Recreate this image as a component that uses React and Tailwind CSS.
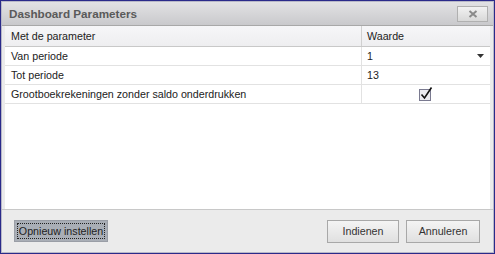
import React from "react";

export default function App() {
  const font = { fontFamily: '"Liberation Sans", Arial, sans-serif' };
  return (
    <div className="w-[495px] h-[254px] bg-[#2a2a8a] p-px" style={font}>
      <div className="w-full h-full bg-[#ebebeb] border border-[#b8b8c8] flex flex-col">
        <div className="h-[24px] flex items-center justify-between pl-[7px] pr-[5px] bg-gradient-to-b from-[#e2e2e4] to-[#c9c9cc] border-b border-[#a8a8a8]">
          <span className="text-[11.7px] font-bold text-[#5a5a5a]">Dashboard Parameters</span>
          <div className="w-[31px] h-[16px] border border-[#b0b0b0] bg-gradient-to-b from-[#f2f2f2] to-[#d8d8d8] flex items-center justify-center">
            <svg width="10" height="8" viewBox="0 0 10 8">
              <path d="M1.5 1 L8.5 7 M8.5 1 L1.5 7" stroke="#8a8a8a" strokeWidth="2" />
            </svg>
          </div>
        </div>
        <div className="mx-[3px] h-[183px] bg-white flex flex-col text-[10.7px] text-[#222]">
          <div className="h-[21px] flex bg-gradient-to-b from-[#f6f6f8] to-[#eeeef0] border-b border-[#c8c8c8]">
            <div className="w-[357px] pl-[6px] flex items-center border-r border-[#d0d0d0]">Met de parameter</div>
            <div className="flex-1 pl-[5px] flex items-center">Waarde</div>
          </div>
          <div className="h-[19px] flex border-b border-[#e2e2e2]">
            <div className="w-[357px] pl-[6px] flex items-center border-r border-[#e2e2e2]">Van periode</div>
            <div className="flex-1 pl-[5px] pr-[6px] flex items-center justify-between">
              <span>1</span>
              <svg width="7" height="4" viewBox="0 0 7 4"><path d="M0 0 H7 L3.5 4 Z" fill="#333" /></svg>
            </div>
          </div>
          <div className="h-[19px] flex border-b border-[#e2e2e2]">
            <div className="w-[357px] pl-[6px] flex items-center border-r border-[#e2e2e2]">Tot periode</div>
            <div className="flex-1 pl-[5px] flex items-center">13</div>
          </div>
          <div className="h-[19px] flex border-b border-[#e2e2e2]">
            <div className="w-[357px] pl-[6px] flex items-center border-r border-[#e2e2e2]">Grootboekrekeningen zonder saldo onderdrukken</div>
            <div className="flex-1 flex items-center justify-center">
              <svg width="14" height="14" viewBox="0 0 14 14">
                <rect x="0.5" y="2.5" width="11" height="11" fill="#eaeaf0" stroke="#7a7a90" />
                <path d="M2.5 7.5 L5.5 11 L12.5 0.5" stroke="#111" strokeWidth="1.6" fill="none" />
              </svg>
            </div>
          </div>
        </div>
        <div className="flex-1 border-t border-[#c8c8c8] flex items-center justify-between pl-[12px] pr-[13px]">
          <div className="w-[94px] h-[22px] bg-[#a9aeb6] border border-[#9a9ea6] flex items-center justify-center">
            <span className="text-[10.7px] text-[#222] border border-dotted border-[#222] px-[1px] leading-[14px]">Opnieuw instellen</span>
          </div>
          <div className="flex gap-[7px]">
            <div className="w-[72px] h-[23px] bg-gradient-to-b from-[#f4f4f4] to-[#e0e0e0] border border-[#a8a8a8] flex items-center justify-center text-[10.7px] text-[#333]">Indienen</div>
            <div className="w-[74px] h-[23px] bg-gradient-to-b from-[#f4f4f4] to-[#e0e0e0] border border-[#a8a8a8] flex items-center justify-center text-[10.7px] text-[#333]">Annuleren</div>
          </div>
        </div>
      </div>
    </div>
  );
}
